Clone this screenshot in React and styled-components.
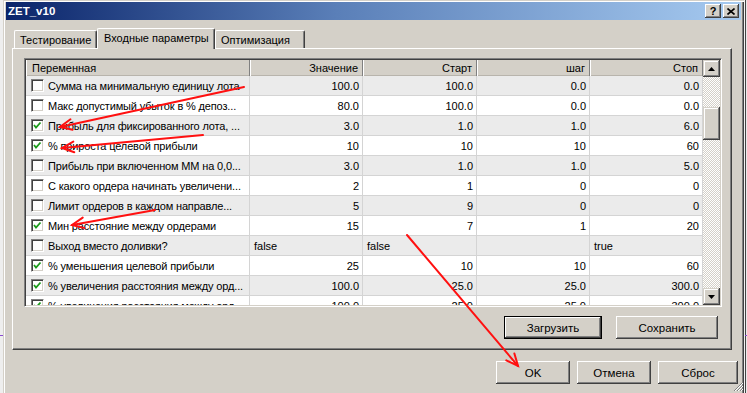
import React from 'react';
import styled, { createGlobalStyle } from 'styled-components';

const FACE = '#d4d0c8';

const GlobalStyle = createGlobalStyle`
  html, body { margin: 0; padding: 0; background: #efefef; overflow: hidden; }
  body { font-family: "Liberation Sans", Arial, sans-serif; font-size: 11px; color: #000; }
  * { box-sizing: border-box; }
`;

const Page = styled.div`
  position: relative;
  width: 747px;
  height: 393px;
  display: flex;
  overflow: hidden;
`;

const SideStrip = styled.div`
  position: relative;
  flex: none;
  width: 3px;
  background: #eeeeee;
  ${p => p.$right && `
    border-left: 1px solid #f4f4f4;
    background: linear-gradient(to right, #444 0 1px, #e8e8e8 1px);
  `}
`;

const Tick = styled.span`
  position: absolute;
  left: 0;
  top: ${p => p.$top}px;
  width: 3px;
  height: 1px;
  background: ${p => p.$color};
`;

const Window = styled.div`
  position: relative;
  flex: none;
  width: 741px;
  height: 396px;
  background: ${FACE};
  padding: 2px 3px 0 3px;
  display: flex;
  flex-direction: column;
  box-shadow: inset 1px 1px ${FACE}, inset 2px 2px #fff, inset -1px 0 #404040, inset -2px 0 #808080;
`;

const TitleBar = styled.div`
  height: 18px;
  display: flex;
  align-items: center;
  padding: 0 2px 0 2px;
  background: linear-gradient(to right, #0a246a 0%, #5a7fb8 45%, #a6caf0 100%);
`;

const TitleText = styled.div`
  flex: 1;
  color: #fff;
  font-weight: bold;
  font-size: 11.5px;
`;

const CaptionButton = styled.div`
  width: 16px;
  height: 14px;
  margin-left: ${p => p.$gap || 0}px;
  background: ${FACE};
  display: flex;
  align-items: center;
  justify-content: center;
  font-weight: bold;
  font-size: 11px;
  box-shadow: inset -1px -1px #404040, inset 1px 1px #fff, inset -2px -2px #808080, inset 2px 2px ${FACE};
`;

const Body = styled.div`
  display: flex;
  flex-direction: column;
  padding: 8px 9px 0 6px;
`;

const TabStrip = styled.div`
  height: 20px;
  display: flex;
  align-items: flex-end;
  padding-left: 2px;
  position: relative;
  z-index: 1;
`;

const Tab = styled.div`
  width: ${p => p.$w}px;
  height: ${p => (p.$active ? 21 : 18)}px;
  margin-bottom: ${p => (p.$active ? -1 : 0)}px;
  padding: ${p => (p.$active ? '0 0 3px 6px' : '1px 0 0 5px')};
  background: ${FACE};
  display: flex;
  align-items: center;
  font-size: 11px;
  white-space: nowrap;
  border-top: 1px solid #fff;
  border-left: 1px solid #fff;
  border-right: 1px solid #404040;
  border-top-left-radius: 2px;
  border-top-right-radius: 2px;
  box-shadow: inset -1px 0 #808080;
`;

const Panel = styled.div`
  height: 302px;
  display: flex;
  flex-direction: column;
  padding: 9px 10px 0 11px;
  border-top: 1px solid #fff;
  border-left: 1px solid #fff;
  border-right: 1px solid #404040;
  border-bottom: 1px solid #404040;
  box-shadow: inset -1px -1px #808080;
`;

const Grid = styled.div`
  width: 698px;
  height: 249px;
  display: flex;
  border: 1px solid;
  border-color: #808080 #fff #fff #808080;
  box-shadow: inset 1px 1px #404040, inset -1px -1px ${FACE};
  padding: 1px;
  background: #fff;
`;

const Table = styled.div`
  flex: 1;
  overflow: hidden;
  display: flex;
  flex-direction: column;
`;

const COLS = '224px 113px 114px 113px 113px';

const HeaderRow = styled.div`
  flex: none;
  height: 16px;
  display: grid;
  grid-template-columns: ${COLS};
  background: ${FACE};
`;

const HeadCell = styled.div`
  display: flex;
  align-items: center;
  justify-content: ${p => (p.$left ? 'flex-start' : 'flex-end')};
  padding: ${p => (p.$left ? '0 0 0 6px' : '0 4px 0 0')};
  font-size: 11px;
  color: #000;
  border-right: 1px solid #808080;
  box-shadow: inset 1px 0 #fff, inset 0 -1px #b8b4ac;
  white-space: nowrap;
`;

const Row = styled.div`
  flex: none;
  height: 20px;
  display: grid;
  grid-template-columns: ${COLS};
  background: ${p => (p.$alt ? '#ebebeb' : '#fff')};
`;

const Cell = styled.div`
  display: flex;
  align-items: center;
  justify-content: ${p => (p.$left ? 'flex-start' : 'flex-end')};
  padding: ${p => (p.$left ? '0 0 0 4px' : '0 3px 0 0')};
  font-size: 11px;
  white-space: nowrap;
  overflow: hidden;
  border-right: 1px solid #d4d4d4;
  border-bottom: 1px solid #d4d4d4;
`;

const NameCell = styled(Cell)`
  justify-content: flex-start;
  padding: 0 0 0 5px;
  gap: 4px;
  letter-spacing: -0.15px;
`;

const CheckBox = styled.div`
  flex: none;
  width: 13px;
  height: 13px;
  background: #fff;
  border: 1px solid;
  border-color: #808080 #fff #fff #808080;
  box-shadow: inset 1px 1px #404040, inset -1px -1px ${FACE};
  display: flex;
  align-items: center;
  justify-content: center;
`;

const ScrollBar = styled.div`
  flex: none;
  width: 17px;
  display: flex;
  flex-direction: column;
  background: repeating-conic-gradient(#fff 0 25%, ${FACE} 0 50%) 0 0 / 2px 2px;
`;

const ScrollButton = styled.div`
  flex: none;
  height: ${p => p.$h || 17}px;
  background: ${FACE};
  display: flex;
  align-items: center;
  justify-content: center;
  box-shadow: inset -1px -1px #404040, inset 1px 1px ${FACE}, inset -2px -2px #808080, inset 2px 2px #fff;
`;

const TrackGap = styled.div`
  flex: ${p => (p.$fill ? 1 : 'none')};
  height: ${p => p.$h || 0}px;
`;

const ButtonRow = styled.div`
  display: flex;
  justify-content: flex-end;
  gap: ${p => p.$gap}px;
  margin-top: ${p => p.$top}px;
  margin-right: ${p => p.$right}px;
`;

const Button = styled.div`
  width: ${p => p.$w}px;
  height: 23px;
  background: ${FACE};
  display: flex;
  align-items: center;
  justify-content: center;
  font-size: 11.5px;
  ${p => p.$default
    ? `border: 1px solid #000; box-shadow: inset -1px -1px #404040, inset 1px 1px #fff, inset -2px -2px #808080;`
    : `box-shadow: inset -1px -1px #404040, inset 1px 1px #fff, inset -2px -2px #808080, inset 2px 2px ${FACE};`}
`;

const Grip = styled.svg`
  position: absolute;
  right: 0;
  top: 380px;
`;

const Overlay = styled.svg`
  position: absolute;
  left: 0;
  top: 0;
  pointer-events: none;
  z-index: 10;
`;

const rows = [
  { c: false, n: 'Сумма на минимальную единицу лота', v: ['100.0', '100.0', '0.0', '0.0'] },
  { c: false, n: 'Макс допустимый убыток в % депоз...', v: ['80.0', '100.0', '0.0', '0.0'] },
  { c: true, n: 'Прибыль для фиксированного лота, ...', v: ['3.0', '1.0', '1.0', '6.0'] },
  { c: true, n: '% прироста целевой прибыли', v: ['10', '10', '10', '60'] },
  { c: false, n: 'Прибыль при включенном ММ на 0,0...', v: ['3.0', '1.0', '1.0', '5.0'] },
  { c: false, n: 'С какого ордера начинать увеличени...', v: ['2', '1', '0', '0'] },
  { c: false, n: 'Лимит ордеров в каждом направле...', v: ['5', '9', '0', '0'] },
  { c: true, n: 'Мин расстояние между ордерами', v: ['15', '7', '1', '20'] },
  { c: false, n: 'Выход вместо доливки?', v: ['false', 'false', '', 'true'], left: true },
  { c: true, n: '% уменьшения целевой прибыли', v: ['25', '10', '10', '60'] },
  { c: true, n: '% увеличения расстояния между орд...', v: ['100.0', '25.0', '25.0', '300.0'] },
  { c: true, n: '% увеличения расстояния между орд...', v: ['100.0', '25.0', '25.0', '300.0'] },
];

const Check = () => (
  <svg width="9" height="9" viewBox="0 0 9 9">
    <polyline points="1,4 3,6.5 7.5,1.5" fill="none" stroke="#1a9a1a" strokeWidth="1.8" />
  </svg>
);

const Tri = ({ down }) => (
  <svg width="7" height="4" viewBox="0 0 7 4">
    <polygon points={down ? '0,0 7,0 3.5,4' : '0,4 7,4 3.5,0'} fill="#000" />
  </svg>
);

const arrows = [
  [244, 87, 60, 127],
  [203, 135, 62, 148],
  [155, 210, 72, 225],
  [407, 235, 518, 366],
];

const Arrow = ({ a }) => {
  const [x1, y1, x2, y2] = a;
  const dx = x2 - x1, dy = y2 - y1;
  const L = Math.hypot(dx, dy);
  const ux = dx / L, uy = dy / L;
  const len = 13, ang = 0.42;
  const w = s => {
    const c = Math.cos(s * ang), sn = Math.sin(s * ang);
    const rx = ux * c - uy * sn, ry = ux * sn + uy * c;
    return `${x2 - rx * len},${y2 - ry * len}`;
  };
  return (
    <g stroke="#ff1010" strokeWidth="2" fill="none" strokeLinecap="round">
      <line x1={x1} y1={y1} x2={x2} y2={y2} />
      <polyline points={`${w(1)} ${x2},${y2} ${w(-1)}`} />
    </g>
  );
};

export default function App() {
  return (
    <>
      <GlobalStyle />
      <Page>
        <SideStrip>
          <Tick $top={335} $color="#8a4bd0" />
        </SideStrip>
        <Window>
          <TitleBar>
            <TitleText>ZET_v10</TitleText>
            <CaptionButton>?</CaptionButton>
            <CaptionButton $gap={2}>
              <svg width="8" height="7" viewBox="0 0 8 7">
                <path d="M0.5 0.5 L7.5 6.5 M7.5 0.5 L0.5 6.5" stroke="#000" strokeWidth="1.6" />
              </svg>
            </CaptionButton>
          </TitleBar>
          <Body>
            <TabStrip>
              <Tab $w={83}>Тестирование</Tab>
              <Tab $w={118} $active>Входные параметры</Tab>
              <Tab $w={90}>Оптимизация</Tab>
            </TabStrip>
            <Panel>
              <Grid>
                <Table>
                  <HeaderRow>
                    <HeadCell $left>Переменная</HeadCell>
                    <HeadCell>Значение</HeadCell>
                    <HeadCell>Старт</HeadCell>
                    <HeadCell>шаг</HeadCell>
                    <HeadCell>Стоп</HeadCell>
                  </HeaderRow>
                  {rows.map((r, i) => (
                    <Row key={i} $alt={i % 2 === 0}>
                      <NameCell>
                        <CheckBox>{r.c && <Check />}</CheckBox>
                        <span>{r.n}</span>
                      </NameCell>
                      {r.v.map((v, j) => (
                        <Cell key={j} $left={r.left}>{v}</Cell>
                      ))}
                    </Row>
                  ))}
                </Table>
                <ScrollBar>
                  <ScrollButton><Tri /></ScrollButton>
                  <TrackGap $h={30} />
                  <ScrollButton $h={33} />
                  <TrackGap $fill />
                  <ScrollButton><Tri down /></ScrollButton>
                </ScrollBar>
              </Grid>
              <ButtonRow $gap={14} $top={9} $right={3}>
                <Button $w={98} $default>Загрузить</Button>
                <Button $w={102}>Сохранить</Button>
              </ButtonRow>
            </Panel>
            <ButtonRow $gap={7} $top={11} $right={-6}>
              <Button $w={74}>OK</Button>
              <Button $w={74}>Отмена</Button>
              <Button $w={80}>Сброс</Button>
            </ButtonRow>
          </Body>
          <Grip width="12" height="12" viewBox="0 0 12 12">
            <path d="M11 2 L2 11 M11 5 L5 11 M11 8 L8 11" stroke="#808080" strokeWidth="1" />
            <path d="M11 3 L3 11 M11 6 L6 11 M11 9 L9 11" stroke="#fff" strokeWidth="1" />
          </Grip>
        </Window>
        <SideStrip $right>
          <Tick $top={335} $color="#8a4bd0" />
        </SideStrip>
        <Overlay width="747" height="393">
          {arrows.map((a, i) => <Arrow key={i} a={a} />)}
        </Overlay>
      </Page>
    </>
  );
}
